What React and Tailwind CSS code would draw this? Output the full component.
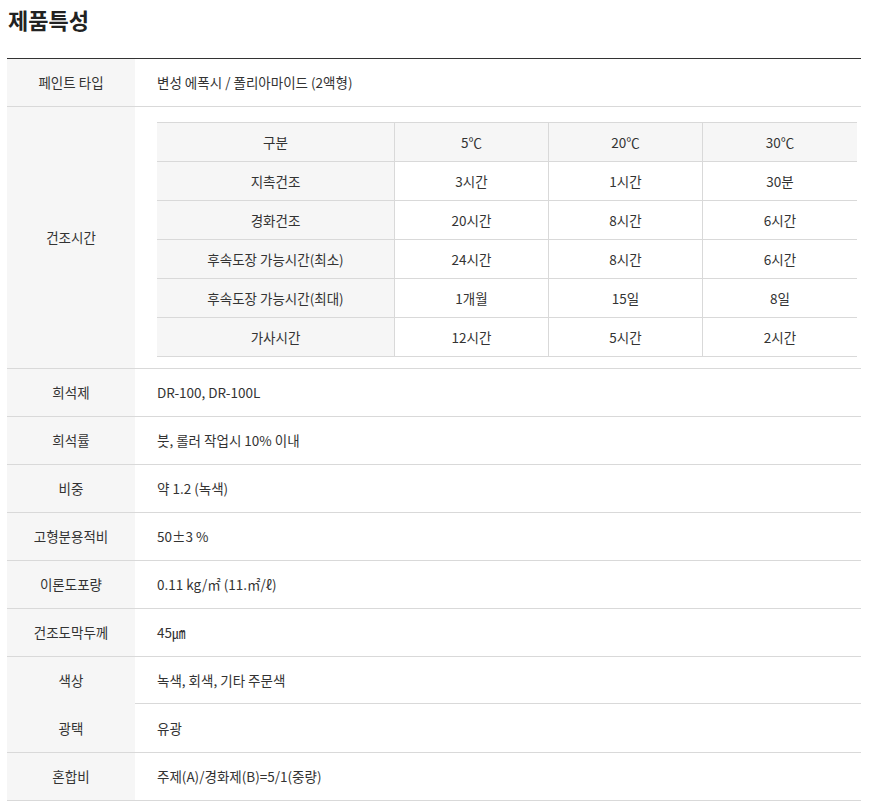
import React from "react";

const rows = [
  ["희석제", "DR-100, DR-100L"],
  ["희석률", "붓, 롤러 작업시 10% 이내"],
  ["비중", "약 1.2 (녹색)"],
  ["고형분용적비", "50±3 %"],
  ["이론도포량", "0.11 kg/㎡ (11.㎡/ℓ)"],
  ["건조도막두께", "45㎛"],
];

const dry = [
  ["지촉건조", "3시간", "1시간", "30분"],
  ["경화건조", "20시간", "8시간", "6시간"],
  ["후속도장 가능시간(최소)", "24시간", "8시간", "6시간"],
  ["후속도장 가능시간(최대)", "1개월", "15일", "8일"],
  ["가사시간", "12시간", "5시간", "2시간"],
];

const Row = ({ label, value, border = true }) => (
  <div className={`flex h-[48px] ${border ? "border-b border-[#d9d9d9]" : ""}`}>
    <div className="w-[128px] bg-[#f6f6f6] flex items-center justify-center">{label}</div>
    <div className="flex-1 flex items-center pl-[22px]">{value}</div>
  </div>
);

export default function App() {
  return (
    <div
      className="bg-white text-[13.5px] text-[#333] w-[877px] h-[806px]"
      style={{ fontFamily: '"Noto Sans CJK KR", "Noto Sans", sans-serif' }}
    >
      <h1 className="text-[22px] font-bold text-[#222] pl-[8px] pt-[2px] h-[58px] leading-[34px]">제품특성</h1>
      <div className="mx-[7px] w-[854px] border-t border-[#333]">
        <Row label="페인트 타입" value="변성 에폭시 / 폴리아마이드 (2액형)" />
        <div className="flex h-[262px] border-b border-[#d9d9d9]">
          <div className="w-[128px] bg-[#f6f6f6] flex items-center justify-center">건조시간</div>
          <div className="flex-1 pl-[22px] pt-[15px]">
            <div className="w-[700px] border-t border-[#d9d9d9]">
              <div className="flex h-[39px] bg-[#f6f6f6] border-b border-[#d9d9d9]">
                <div className="w-[238px] flex items-center justify-center border-r border-[#d9d9d9]">구분</div>
                <div className="w-[154px] flex items-center justify-center border-r border-[#d9d9d9]">5℃</div>
                <div className="w-[154px] flex items-center justify-center border-r border-[#d9d9d9]">20℃</div>
                <div className="w-[154px] flex items-center justify-center">30℃</div>
              </div>
              {dry.map((r) => (
                <div key={r[0]} className="flex h-[39px] border-b border-[#d9d9d9]">
                  <div className="w-[238px] bg-[#f6f6f6] flex items-center justify-center border-r border-[#d9d9d9]">{r[0]}</div>
                  <div className="w-[154px] flex items-center justify-center border-r border-[#d9d9d9]">{r[1]}</div>
                  <div className="w-[154px] flex items-center justify-center border-r border-[#d9d9d9]">{r[2]}</div>
                  <div className="w-[154px] flex items-center justify-center">{r[3]}</div>
                </div>
              ))}
            </div>
          </div>
        </div>
        {rows.map(([l, v]) => (
          <Row key={l} label={l} value={v} />
        ))}
        <div className="flex">
          <div className="w-[128px] bg-[#f6f6f6] flex flex-col">
            <div className="h-[47px] flex items-center justify-center">색상</div>
            <div className="h-[48px] flex items-center justify-center">광택</div>
          </div>
          <div className="flex-1">
            <div className="h-[47px] flex items-center pl-[22px] border-b border-[#d9d9d9]">녹색, 회색, 기타 주문색</div>
            <div className="h-[48px] flex items-center pl-[22px]">유광</div>
          </div>
        </div>
        <div className="border-t border-[#d9d9d9]">
          <Row label="혼합비" value="주제(A)/경화제(B)=5/1(중량)" />
        </div>
      </div>
    </div>
  );
}
